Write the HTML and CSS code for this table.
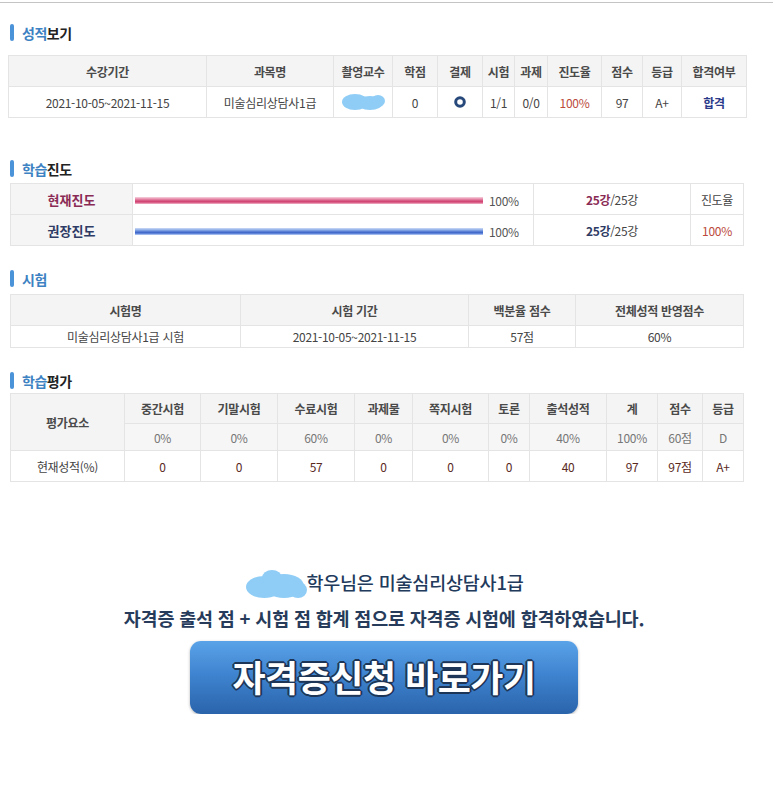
FILE: index.html
```html
<!DOCTYPE html>
<html lang="ko">
<head>
    <meta charset="UTF-8">
    <meta name="viewport" content="width=device-width, initial-scale=1.0">
    <title>성적보기</title>
    <link rel="stylesheet" href="styles.css">
</head>
<body>
    <div class="topline"></div>

    <div class="wrap">
        <!-- 성적보기 -->
        <h3 class="title t1"><span class="bar"></span><span class="blue">성적</span>보기</h3>
        <table class="grid grade">
            <colgroup>
                <col style="width:198px"><col style="width:127px"><col style="width:59px"><col style="width:45px">
                <col style="width:45px"><col style="width:32px"><col style="width:33px"><col style="width:54px">
                <col style="width:41px"><col style="width:39px"><col style="width:65px">
            </colgroup>
            <tr class="head">
                <th>수강기간</th><th>과목명</th><th>촬영교수</th><th>학점</th><th>결제</th><th>시험</th>
                <th>과제</th><th>진도율</th><th>점수</th><th>등급</th><th>합격여부</th>
            </tr>
            <tr class="row">
                <td>2021-10-05~2021-11-15</td>
                <td>미술심리상담사1급</td>
                <td>
                    <svg class="blob" width="46" height="20" viewBox="0 0 46 20">
                        <ellipse cx="15" cy="10" rx="13" ry="8" fill="#8fcdf6"/>
                        <ellipse cx="30" cy="11" rx="13" ry="7" fill="#8fcdf6"/>
                        <ellipse cx="38" cy="9" rx="7" ry="6" fill="#8fcdf6"/>
                    </svg>
                </td>
                <td>0</td>
                <td>
                    <svg width="12" height="12" viewBox="0 0 12 12" class="ring">
                        <circle cx="6" cy="6" r="4.3" fill="none" stroke="#27487b" stroke-width="3"/>
                    </svg>
                </td>
                <td>1/1</td>
                <td>0/0</td>
                <td class="red">100%</td>
                <td>97</td>
                <td>A+</td>
                <td class="pass">합격</td>
            </tr>
        </table>

        <!-- 학습진도 -->
        <h3 class="title t2"><span class="bar"></span><span class="blue">학습</span>진도</h3>
        <table class="grid progress">
            <colgroup>
                <col style="width:122px"><col style="width:401px"><col style="width:157px"><col style="width:53px">
            </colgroup>
            <tr>
                <th class="label pink">현재진도</th>
                <td class="barcell"><span class="pbar pinkbar"></span><span class="pct">100%</span></td>
                <td><b class="pink">25강</b>/25강</td>
                <td>진도율</td>
            </tr>
            <tr>
                <th class="label navy">권장진도</th>
                <td class="barcell"><span class="pbar bluebar"></span><span class="pct">100%</span></td>
                <td><b class="navy">25강</b>/25강</td>
                <td class="red">100%</td>
            </tr>
        </table>

        <!-- 시험 -->
        <h3 class="title t3"><span class="bar"></span><span class="blue">시험</span></h3>
        <table class="grid exam">
            <colgroup>
                <col style="width:230px"><col style="width:228px"><col style="width:107px"><col style="width:168px">
            </colgroup>
            <tr class="head">
                <th>시험명</th><th>시험 기간</th><th>백분율 점수</th><th>전체성적 반영점수</th>
            </tr>
            <tr class="row">
                <td>미술심리상담사1급 시험</td>
                <td>2021-10-05~2021-11-15</td>
                <td>57점</td>
                <td>60%</td>
            </tr>
        </table>

        <!-- 학습평가 -->
        <h3 class="title t4"><span class="bar"></span><span class="blue">학습</span>평가</h3>
        <table class="grid eval">
            <colgroup>
                <col style="width:114px"><col style="width:76px"><col style="width:77px"><col style="width:77px">
                <col style="width:58px"><col style="width:76px"><col style="width:41px"><col style="width:77px">
                <col style="width:51px"><col style="width:45px"><col style="width:41px">
            </colgroup>
            <tr class="head">
                <th rowspan="2">평가요소</th>
                <th>중간시험</th><th>기말시험</th><th>수료시험</th><th>과제물</th><th>쪽지시험</th>
                <th>토론</th><th>출석성적</th><th>계</th><th>점수</th><th>등급</th>
            </tr>
            <tr class="ratio">
                <td>0%</td><td>0%</td><td>60%</td><td>0%</td><td>0%</td>
                <td>0%</td><td>40%</td><td>100%</td><td>60점</td><td>D</td>
            </tr>
            <tr class="score">
                <td class="name">현재성적(%)</td>
                <td>0</td><td>0</td><td>57</td><td>0</td><td>0</td>
                <td>0</td><td>40</td><td>97</td><td>97점</td><td>A+</td>
            </tr>
        </table>

        <!-- 합격 안내 -->
        <div class="notice">
            <p class="line1">
                <svg class="blob2" width="64" height="34" viewBox="0 0 64 34">
                    <ellipse cx="20" cy="19" rx="18" ry="11" fill="#8fcdf6"/>
                    <ellipse cx="40" cy="18" rx="20" ry="12" fill="#8fcdf6"/>
                    <ellipse cx="28" cy="10" rx="10" ry="8" fill="#8fcdf6"/>
                    <ellipse cx="54" cy="22" rx="9" ry="8" fill="#8fcdf6"/>
                </svg>학우님은 미술심리상담사1급
            </p>
            <p class="line2">자격증 출석 점 + 시험 점 합계 점으로 자격증 시험에 합격하였습니다.</p>
            <a href="#" class="apply">자격증신청 바로가기</a>
        </div>
    </div>
</body>
</html>
```

FILE: styles.css
```css
/* Page base */
body {
    margin: 0;
    background: #fff;
    font-family: "Noto Sans CJK KR", sans-serif;
    color: #444;
}

.topline {
    margin-top: 2px;
    height: 1px;
    background-color: #c4c4c4;
}

.wrap {
    padding-left: 8px;
}

/* Section titles */
.title {
    display: flex;
    align-items: center;
    margin: 0;
    height: 17px;
    font-size: 14px;
    font-weight: bold;
    color: #222;
    letter-spacing: -0.5px;
}

.title .bar {
    width: 4px;
    height: 17px;
    margin: 0 8px 0 2px;
    border-radius: 2px;
    background-color: #4b93d8;
}

.title .blue {
    color: #3d82c2;
}

.t1 { margin-top: 21px; }
.t2 { margin-top: 42px; }
.t3 { margin-top: 24px; }
.t4 { margin-top: 24px; }

/* Common table */
.grid {
    border-collapse: collapse;
    table-layout: fixed;
    font-size: 12px;
    letter-spacing: -0.3px;
}

.grid th, .grid td {
    border: 1px solid #e4e4e4;
    padding: 0;
    text-align: center;
    vertical-align: middle;
    white-space: nowrap;
}

.grid th {
    font-weight: bold;
    color: #4a4a4a;
    background-color: #f4f4f4;
}

.grid td {
    color: #444;
}

.red { color: #bb4a3c !important; }

/* 성적보기 */
.grade {
    width: 738px;
    margin-top: 14px;
}

.grade .head th { height: 30px; }
.grade .row td { height: 30px; }

.grade .pass {
    font-weight: bold;
    color: #2b3b8c;
}

.blob, .ring {
    display: block;
    margin: 0 auto;
}

/* 학습진도 */
.progress {
    width: 733px;
    margin: 6px 0 0 2px;
}

.progress th, .progress td { height: 30px; }

.progress .label {
    font-size: 13px;
    letter-spacing: 0;
    background-color: #f5f5f5;
}

.pink, .progress .label.pink { color: #8a2b55; }
.navy, .progress .label.navy { color: #2e3b64; }

.progress td b { font-weight: bold; }

.barcell {
    text-align: left !important;
    padding-left: 2px !important;
}

.pbar {
    display: inline-block;
    vertical-align: middle;
    width: 348px;
    height: 7px;
}

.pinkbar {
    background: linear-gradient(to bottom, #f7d2de 0%, #e88eac 28%, #cf4272 62%, #df6c93 85%, #f5c4d3 100%);
}

.bluebar {
    background: linear-gradient(to bottom, #cfdcf5 0%, #8eaee9 28%, #3e66c9 62%, #6a8fdf 85%, #d0ddf6 100%);
}

.pct {
    vertical-align: middle;
    margin-left: 6px;
    color: #555;
}

/* 시험 */
.exam {
    width: 733px;
    margin: 7px 0 0 2px;
}

.exam .head th { height: 30px; }
.exam .row td { height: 21px; }

/* 학습평가 */
.eval {
    width: 733px;
    margin: 4px 0 0 2px;
}

.eval .head th { height: 29px; }

.eval .ratio td {
    height: 26px;
    color: #777;
    background-color: #f6f6f6;
}

.eval .score td {
    height: 30px;
    color: #5a2a1e;
}

.eval .score .name { color: #444; }

/* 합격 안내 */
.notice {
    margin-top: 83px;
    text-align: center;
    padding-right: 13px;
}

.notice p {
    margin: 0;
    font-size: 18.5px;
    letter-spacing: -0.2px;
}

.line1 {
    height: 34px;
    line-height: 34px;
    font-weight: 500;
    color: #223a5c;
}

.blob2 {
    vertical-align: middle;
    margin-right: -2px;
}

.line2 {
    margin-top: 6px !important;
    font-weight: bold;
    color: #273b5b;
}

.apply {
    display: inline-block;
    margin-top: 10px;
    width: 388px;
    height: 73px;
    line-height: 70px;
    border-radius: 11px;
    background: linear-gradient(to bottom, #5aa3e8 0%, #3f84d0 45%, #2a64ab 100%);
    box-shadow: 0 1px 3px rgba(0, 0, 0, 0.3);
    color: #fff;
    font-size: 36px;
    font-weight: bold;
    letter-spacing: -0.5px;
    text-decoration: none;
    text-shadow: -2px 0 #1d3557, 2px 0 #1d3557, 0 -2px #1d3557, 0 2px #1d3557,
                 -1px -1px #1d3557, 1px 1px #1d3557, -1px 1px #1d3557, 1px -1px #1d3557;
}
```
